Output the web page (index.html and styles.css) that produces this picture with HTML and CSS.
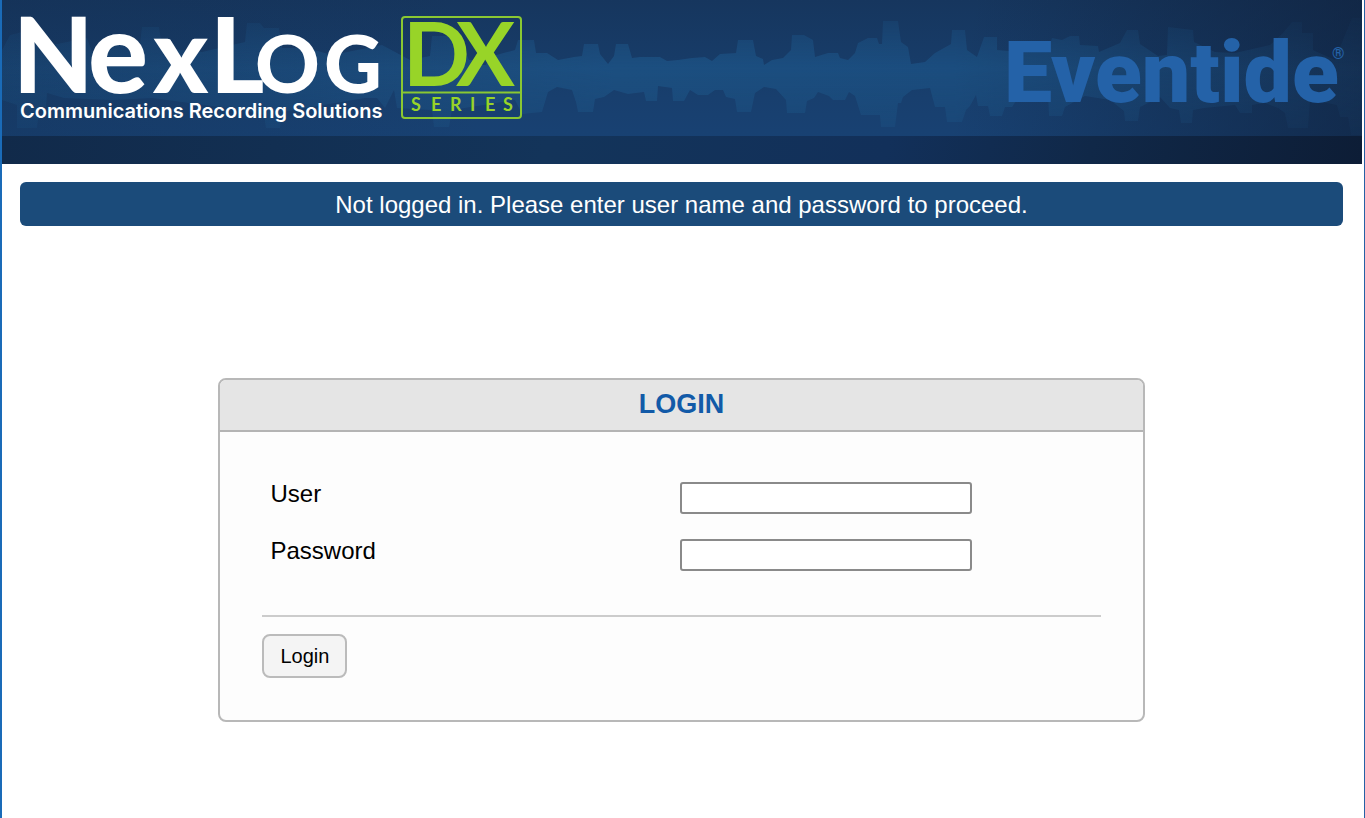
FILE: index.html
```html
<!DOCTYPE html>
<html lang="en">
<head>
<meta charset="utf-8">
<title>NexLog DX-Series - Login</title>
<link rel="stylesheet" href="styles.css">
</head>
<body>
<div class="page">
  <header class="banner">
    <svg class="wave" viewBox="0 0 1360 136" preserveAspectRatio="none" aria-hidden="true">
      <defs>
        <linearGradient id="tone" x1="0" y1="0" x2="1" y2="0">
          <stop offset="0" stop-color="#1c5080" stop-opacity=".4"/>
          <stop offset=".3" stop-color="#1d5182" stop-opacity=".7"/>
          <stop offset=".45" stop-color="#1c4f80"/>
          <stop offset=".7" stop-color="#1b4d7e"/>
          <stop offset=".88" stop-color="#1a4672" stop-opacity=".6"/>
          <stop offset="1" stop-color="#1a4068" stop-opacity=".3"/>
        </linearGradient>
        <linearGradient id="fade" x1="0" y1="0" x2="0" y2="1">
          <stop offset="0" stop-color="#fff" stop-opacity=".1"/>
          <stop offset=".5" stop-color="#fff"/>
          <stop offset="1" stop-color="#fff" stop-opacity=".5"/>
        </linearGradient>
        <mask id="soft"><rect width="1360" height="136" fill="url(#fade)"/></mask>
      </defs>
      <g mask="url(#soft)">
      <path fill="url(#tone)" d="M0 50 8 35 20 32 50 45 85 38 90 52 115 44 138 44 140 27 157 27 160 48 200 52 243 42 245 23 258 23 262 28 277 28 280 48 305 48 330 55 380 45 408 60 428 56 430 36 452 36 455 50 464 53 467 60 476 60 480 65 484 65 487 57 513 50 516 40 532 40 534 53 545 53 556 60 572 57 580 56 582 44 596 44 598 54 606 64 612 56 614 44 626 44 630 58 638 57 658 57 665 61 676 60 690 58 703 57 710 61 718 54 734 53 736 40 751 40 754 56 761 59 762 65 770 60 781 58 789 50 790 35 802 35 811 40 813 57 826 53 836 53 838 58 846 60 853 53 856 43 866 38 875 38 877 44 880 44 881 21 896 21 899 42 906 47 909 64 923 62 933 53 949 44 950 30 963 30 965 50 975 57 982 37 995 37 995 50 1018 52 1046 50 1050 38 1060 40 1068 36 1077 36 1078 45 1096 46 1097 52 1118 43 1125 30 1136 30 1138 44 1156 56 1165 55 1166 27 1191 30 1192 42 1213 52 1233 53 1268 45 1281 33 1290 22 1300 22 1300 33 1311 33 1311 50 1333 60 1343 35 1350 18 1360 18V135H1349L1346 117 1338 117 1335 105 1308 100 1306 128 1286 128 1283 113 1276 108 1263 103 1250 105 1250 113 1238 113 1233 105 1202 108 1191 110 1190 123 1179 123 1177 110 1168 108 1158 97 1138 107 1136 121 1123 121 1122 111 1108 100 1083 96 1063 107 1060 116 1047 116 1046 95 1018 95 1010 107 1003 107 1000 116 988 116 986 106 976 106 974 95 968 106 964 110 960 122 945 122 943 107 933 107 928 88 910 90 901 97 899 103 896 103 893 127 879 127 878 115 859 115 853 96 847 92 843 100 831 100 827 96 816 92 812 98 805 101 803 113 785 113 784 100 774 89 762 87 753 93 749 112 735 112 733 99 724 97 721 90 713 90 706 95 696 95 688 90 682 101 671 101 670 88 656 86 655 101 644 101 642 92 626 94 612 90 602 97 593 99 591 112 576 112 574 102 570 90 555 87 546 92 540 112 520 114 513 100 450 110 447 127 432 127 430 110 395 108 392 90 383 108 375 98 363 98 280 112 278 128 264 128 262 115 240 110 150 98 110 100 62 98 45 93 44 107 37 110 35 128 15 128 15 105 0 100z"/>
      </g>
    </svg>
    <div class="brands">
      <svg class="nexlog" width="506" height="110" viewBox="0 0 506 110" role="img" aria-label="NexLog DX Series, Communications Recording Solutions">
        <text class="wordmark" y="81"><tspan class="tall" x="-7">N</tspan><tspan class="round" x="68">e</tspan><tspan class="tall" x="133">x</tspan><tspan class="tall" x="190">L</tspan><tspan class="low" x="235 304">OG</tspan></text>
        <text class="tagline" x="0" y="106">Communications Recording Solutions</text>
        <g class="dx">
          <rect x="382" y="5" width="119" height="101" rx="3"/>
          <path d="M382 80.500h119"/>
          <text class="dx-name" x="383 436" y="74">DX</text>
          <text class="dx-series" x="391 411 430 450 465 483" y="99">SERIES</text>
        </g>
      </svg>
      <svg class="eventide" width="340" height="80" viewBox="0 0 340 80" role="img" aria-label="Eventide">
        <text class="eventide-name" x="0" y="72">Eventide</text>
        <text class="eventide-mark" x="328" y="29">®</text>
      </svg>
    </div>
    <div class="strip"></div>
  </header>
  <main class="content">
    <p class="notice">Not logged in. Please enter user name and password to proceed.</p>
    <form class="card">
      <h1 class="card-title">LOGIN</h1>
      <div class="card-body">
        <div class="fields">
          <label for="user">User</label>
          <input class="box" id="user" type="text">
          <label for="password">Password</label>
          <input class="box" id="password" type="password">
        </div>
        <div class="actions"><button class="submit" type="submit">Login</button></div>
      </div>
    </form>
  </main>
</div>
</body>
</html>
```
FILE: styles.css
```css
* { box-sizing: border-box; }
body {
  margin: 0;
  background: #fff;
  font-family: "Liberation Sans", Arial, sans-serif;
  color: #000;
}
.page {
  min-height: 100vh;
  border-left: 2px solid #1a6bb8;
  border-right: 1px solid #2561a5;
  padding-right: 2px;
}
.banner {
  position: relative;
  background:
    linear-gradient(100deg, transparent 70%, rgba(14, 28, 52, .6) 100%),
    linear-gradient(80deg, rgba(18, 44, 78, .3), transparent 35%),
    linear-gradient(#16365e, #183f6e 60%, #184376);
}
.wave {
  position: absolute;
  top: 0;
  left: 0;
  width: 100%;
  height: 136px;
}
.brands {
  position: relative;
  height: 136px;
  padding: 12px 18px;
  display: flex;
  justify-content: space-between;
}
.nexlog, .eventide { overflow: visible; }
.eventide { margin-top: 18px; }
.strip {
  position: relative;
  height: 28px;
  background: linear-gradient(100deg, #112a4a, #13345a 40%, #12305a 65%, #102848 80%, #0d1d36);
}
.wordmark { fill: #fff; font-family: Lato, sans-serif; font-weight: 900; }
.tall { font-size: 104px; }
.round { font-size: 112px; }
.low { font-size: 80px; }
.tagline { fill: #fff; font: 600 20px Inter, sans-serif; }
.dx rect, .dx path { fill: none; stroke: #8ac832; stroke-width: 2; }
.dx text { fill: #98d428; }
.dx-name { font: 700 88px Lato, sans-serif; }
.dx-series { font: 700 18px Lato, sans-serif; }
.eventide text { fill: #2462a8; }
.eventide-name { font: 900 86px Roboto, sans-serif; }
.eventide-mark { font: 700 16px Roboto, sans-serif; }
.content { padding: 18px 19px 40px 18px; }
.notice {
  margin: 0;
  height: 44px;
  border-radius: 6px;
  background: #1b4b7a;
  color: #fff;
  font-size: 24px;
  line-height: 46px;
  text-align: center;
}
.card {
  width: 70%;
  margin: 152px auto 0;
  border: 2px solid #b8b8b8;
  border-radius: 8px;
  background: #fdfdfd;
  overflow: hidden;
}
.card-title {
  margin: 0;
  height: 52px;
  border-bottom: 2px solid #b4b4b4;
  background: #e5e5e5;
  color: #125aa8;
  font-size: 27px;
  line-height: 48px;
  text-align: center;
}
.card-body { padding: 50px 42px 42px; }
.fields {
  display: grid;
  grid-template-columns: 1fr 1fr;
  row-gap: 25px;
  padding: 0 12px 44px 8px;
  border-bottom: 2px solid #ccc;
  font-size: 24px;
  line-height: 24px;
}
.box {
  width: 292px;
  height: 32px;
  border: 2px solid #8a8a8a;
  border-radius: 3px;
  padding: 2px 4px;
  background: #fff;
  font: inherit;
}
.actions { padding-top: 17px; }
.submit {
  height: 44px;
  padding: 0 16px;
  border: 2px solid #bbb;
  border-radius: 8px;
  background: #f4f4f4;
  color: #000;
  font: 20px "Liberation Sans", Arial, sans-serif;
}
```
